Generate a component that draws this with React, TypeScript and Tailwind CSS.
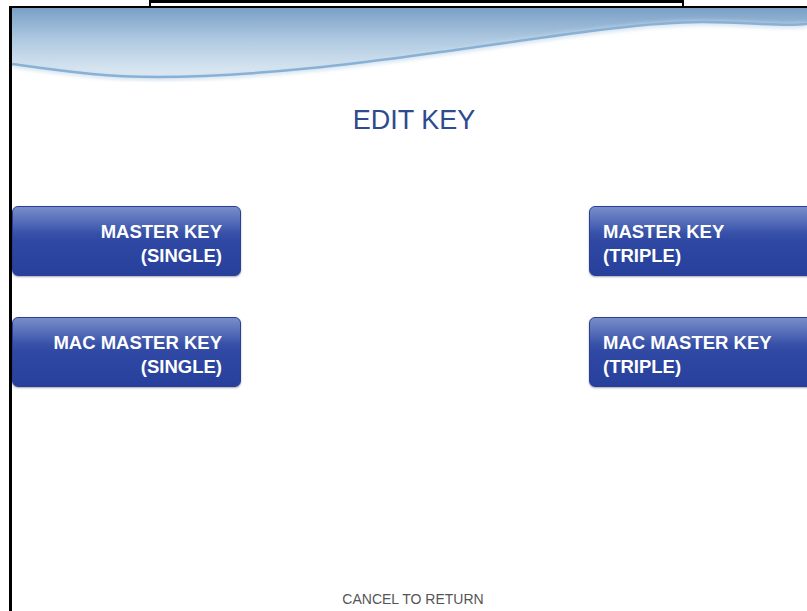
import React from "react";

type KeyButton = {
  line1: string;
  line2: string;
};

const leftButtons: KeyButton[] = [
  { line1: "MASTER KEY", line2: "(SINGLE)" },
  { line1: "MAC MASTER KEY", line2: "(SINGLE)" },
];

const rightButtons: KeyButton[] = [
  { line1: "MASTER KEY", line2: "(TRIPLE)" },
  { line1: "MAC MASTER KEY", line2: "(TRIPLE)" },
];

function Wave() {
  return (
    <svg width="795" height="74" viewBox="0 0 795 74" className="block">
      <defs>
        <linearGradient id="waveFill" x1="0" y1="0" x2="0" y2="72" gradientUnits="userSpaceOnUse">
          <stop offset="0" stopColor="#7a9fc6" />
          <stop offset="0.45" stopColor="#b0cae1" />
          <stop offset="1" stopColor="#e4eef6" />
        </linearGradient>
        <filter id="soft" x="-5%" y="-50%" width="110%" height="200%">
          <feGaussianBlur stdDeviation="2" />
        </filter>
      </defs>
      <path
        d="M0 0 H795 V16 C770 19 740 14 690 14 C600 14 450 45 300 60 C220 68 140 72 80 66 C40 62 15 58 0 56 Z"
        fill="url(#waveFill)"
      />
      <path
        d="M795 17 C770 20 740 15 690 15 C600 15 450 46 300 61 C220 69 140 73 80 67 C40 63 15 59 0 57"
        fill="none"
        stroke="#c9dcec"
        strokeWidth="4"
        filter="url(#soft)"
      />
      <path
        d="M795 16 C770 19 740 14 690 14 C600 14 450 45 300 60 C220 68 140 72 80 66 C40 62 15 58 0 56"
        fill="none"
        stroke="#89b0d5"
        strokeWidth="2.5"
      />
    </svg>
  );
}

function MenuButton({ button, side }: { button: KeyButton; side: "left" | "right" }) {
  const shape =
    side === "left"
      ? "w-[229px] justify-end pr-[18px] text-right"
      : "w-[240px] justify-start pl-[13px] text-left";

  return (
    <div
      className={`relative flex h-[70px] items-center overflow-hidden rounded-[6px] border border-[#2b3f92] bg-gradient-to-b from-[#5670bc] via-[#2f48a3] to-[#26409b] pt-[6px] shadow-[0_1px_2px_rgba(0,0,40,0.35)] ${shape}`}
    >
      <div className="pointer-events-none absolute inset-x-0 top-0 h-[26px] bg-gradient-to-b from-white/20 to-transparent" />
      <div
        className="relative text-[18.5px] font-bold leading-[24px] text-white"
        style={{ fontFamily: '"Liberation Sans", Arial, sans-serif' }}
      >
        <div>{button.line1}</div>
        <div>{button.line2}</div>
      </div>
    </div>
  );
}

export default function App() {
  return (
    <div
      className="flex h-[611px] w-[807px] flex-col overflow-hidden bg-white"
      style={{ fontFamily: '"Liberation Sans", Arial, sans-serif' }}
    >
      {/* cut-off heading bracket above the frame */}
      <div className="h-[6px] shrink-0">
        <div className="ml-[149px] h-[6px] w-[535px] border-x-2 border-t-[3px] border-black" />
      </div>

      {/* screen frame */}
      <div className="ml-[9px] flex flex-1 flex-col border-l-[3px] border-t-2 border-black">
        <Wave />

        <h1 className="mt-[25px] pl-[9px] text-center text-[27px] font-normal leading-[27px] text-[#2d4b8e]">
          EDIT KEY
        </h1>

        <div className="mt-[72px] flex justify-between">
          <div className="flex flex-col gap-[41px]">
            {leftButtons.map((b) => (
              <MenuButton key={b.line1} button={b} side="left" />
            ))}
          </div>
          <div className="-mr-[22px] flex flex-col gap-[41px]">
            {rightButtons.map((b) => (
              <MenuButton key={b.line1} button={b} side="right" />
            ))}
          </div>
        </div>

        <p className="mt-auto pb-[4px] pl-[7px] text-center text-[14px] leading-[16px] text-[#555555]">
          CANCEL TO RETURN
        </p>
      </div>
    </div>
  );
}
